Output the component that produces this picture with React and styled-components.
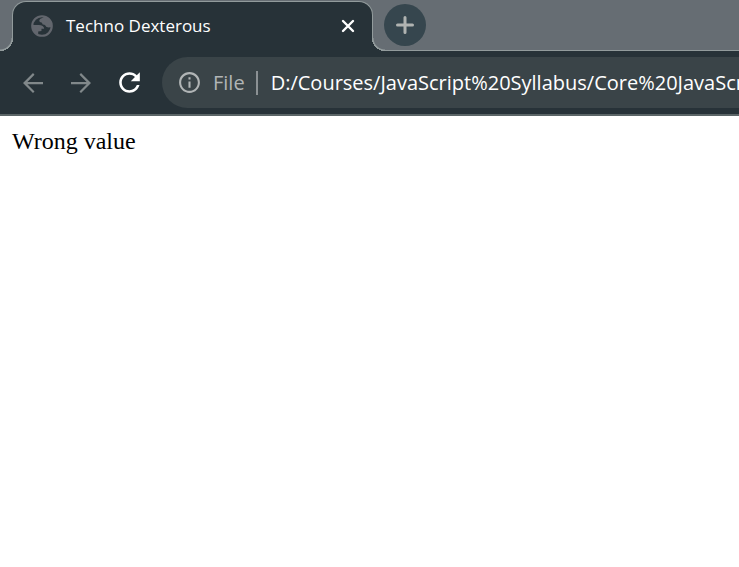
import React from 'react';
import styled, { createGlobalStyle } from 'styled-components';

const GlobalStyle = createGlobalStyle`
  *, *::before, *::after { box-sizing: border-box; }
  body { margin: 0; background: #fff; overflow-x: hidden; }
  button { border: 0; padding: 0; margin: 0; background: none; color: inherit; font: inherit; }
  svg { display: block; flex: none; }
`;

const Browser = styled.div`
  font-family: "Open Sans", "Noto Sans", sans-serif;
  overflow: hidden;
`;

const TabStrip = styled.header`
  display: flex;
  align-items: flex-start;
  height: 51px;
  padding: 1px 12px 0;
  background: #666d73;
  border-bottom: 1px solid #929b9c;
`;

const Tab = styled.div`
  position: relative;
  display: flex;
  align-items: center;
  flex: none;
  width: 361px;
  height: 50px;
  padding: 0 15px 2px 16px;
  color: #fff;
  background: #273238;
  border: 1px solid #929b9c;
  border-bottom: 0;
  border-radius: 14px 14px 0 0;

  &::before,
  &::after {
    content: "";
    position: absolute;
    bottom: 0;
    width: 13px;
    height: 13px;
  }
  &::before {
    left: -13px;
    background: radial-gradient(circle at 0 0, #666d73 11px, #929b9c 12px, #929b9c 13px, #273238 13px);
  }
  &::after {
    right: -13px;
    background: radial-gradient(circle at 100% 0, #666d73 11px, #929b9c 12px, #929b9c 13px, #273238 13px);
  }
`;

const TabTitle = styled.span`
  flex: 1;
  margin-left: 11px;
  font-size: 17px;
  line-height: 24px;
  white-space: nowrap;
`;

const CloseButton = styled.button`
  display: grid;
  place-items: center;
  width: 18px;
  height: 18px;
`;

const NewTabButton = styled.button`
  display: grid;
  place-items: center;
  flex: none;
  width: 42px;
  height: 42px;
  margin: 3px 0 0 11px;
  border-radius: 50%;
  color: #b0b3b1;
  background: #36464e;
`;

const Toolbar = styled.nav`
  display: flex;
  align-items: center;
  height: 65px;
  padding-left: 18px;
  background: #273238;
  border-bottom: 2px solid #5b6567;
`;

const NavButton = styled.button`
  display: grid;
  place-items: center;
  flex: none;
  width: 30px;
  height: 31px;
  margin-right: 18px;
  color: ${({ $active }) => ($active ? '#fff' : '#81888a')};
`;

const AddressBar = styled.div`
  display: flex;
  align-items: center;
  flex: 1;
  min-width: 0;
  height: 51px;
  padding-left: 15px;
  border-radius: 26px 0 0 26px;
  background: #3a4448;
  color: #b1b5b6;
  font-size: 20px;
  line-height: 28px;
`;

const SiteInfo = styled.button`
  display: flex;
  align-items: center;
  flex: none;
  gap: 11px;
`;

const Divider = styled.span`
  flex: none;
  width: 2px;
  height: 24px;
  margin: 0 13px 0 11px;
  background: #8b9194;
`;

const Address = styled.input`
  flex: 1;
  min-width: 0;
  height: 32px;
  padding: 0;
  border: 0;
  outline: 0;
  background: none;
  color: #fff;
  font: inherit;
`;

const Page = styled.main`
  padding: 12px;
  color: #000;
  font-family: "Liberation Serif", "Times New Roman", serif;
  font-size: 24px;
  line-height: 27px;
`;

const Globe = () => (
  <svg width="26" height="26" viewBox="0 0 24 24" fill="none" aria-hidden="true">
    <circle cx="12" cy="12" r="9" stroke="#62666d" strokeWidth="2" />
    <path
      fill="#62666d"
      d="M14 3 C13.500 5 10 4.500 9.500 7 C9.300 9 12 8 12.300 10 C12.600 11.500 14.500 10.500 15.500 12 C16 13.500 18 13.500 21 13 L21.500 9 L18 4.500Z M2.500 11 L9 11 C12 11 14 12.200 14 14.500 L11.500 14.500 L11.500 16.500 L8.500 17 L8.500 20.500 L4.500 18Z"
    />
  </svg>
);

const Icon = ({ size, d }) => (
  <svg width={size} height={size} viewBox="0 0 24 24" fill="currentColor" aria-hidden="true">
    <path d={d} />
  </svg>
);

const BACK = 'M20 11.100H7.500l5.700-5.800L12 4l-8 8 8 8 1.200-1.300-5.700-5.800H20z';
const FORWARD = 'M4 11.100h12.500l-5.700-5.800L12 4l8 8-8 8-1.200-1.300 5.700-5.800H4z';
const RELOAD = 'M17.650 6.350C16.200 4.900 14.210 4 12 4c-4.420 0-7.990 3.580-7.990 8s3.570 8 7.990 8c3.730 0 6.840-2.550 7.730-6h-2.080c-.82 2.330-3.040 4-5.650 4-3.310 0-6-2.690-6-6s2.690-6 6-6c1.660 0 3.140.69 4.220 1.780L13 11h7V4z';
const INFO = 'M11 7h2v2h-2zm0 4h2v6h-2zm1-9C6.480 2 2 6.480 2 12s4.480 10 10 10 10-4.480 10-10S17.520 2 12 2m0 18c-4.410 0-8-3.590-8-8s3.590-8 8-8 8 3.590 8 8-3.590 8-8 8';

export default function App() {
  return (
    <>
      <GlobalStyle />
      <Browser>
        <TabStrip>
          <Tab>
            <Globe />
            <TabTitle>Techno Dexterous</TabTitle>
            <CloseButton aria-label="Close tab">
              <svg width="14" height="14" viewBox="0 0 14 14" stroke="currentColor" strokeWidth="2.4" strokeLinecap="round">
                <path d="M2 2l10 10M12 2L2 12" />
              </svg>
            </CloseButton>
          </Tab>
          <NewTabButton aria-label="New tab">
            <svg width="18" height="18" viewBox="0 0 18 18" stroke="currentColor" strokeWidth="3" strokeLinecap="round">
              <path d="M9 1.500v15M1.500 9h15" />
            </svg>
          </NewTabButton>
        </TabStrip>
        <Toolbar>
          <NavButton aria-label="Back"><Icon size={30} d={BACK} /></NavButton>
          <NavButton aria-label="Forward"><Icon size={30} d={FORWARD} /></NavButton>
          <NavButton aria-label="Reload" $active><Icon size={31} d={RELOAD} /></NavButton>
          <AddressBar>
            <SiteInfo>
              <Icon size={25} d={INFO} />
              <span>File</span>
            </SiteInfo>
            <Divider />
            <Address
              aria-label="Address"
              defaultValue="D:/Courses/JavaScript%20Syllabus/Core%20JavaScript"
            />
          </AddressBar>
        </Toolbar>
        <Page>Wrong value</Page>
      </Browser>
    </>
  );
}
